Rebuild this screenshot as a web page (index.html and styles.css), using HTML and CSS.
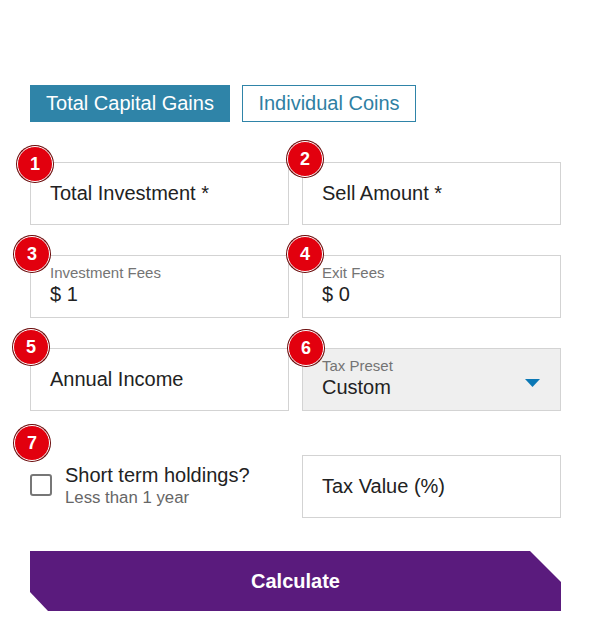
FILE: index.html
```html
<!DOCTYPE html>
<html lang="en">
<head>
<meta charset="utf-8">
<title>Capital Gains Calculator</title>
<link rel="stylesheet" href="styles.css">
</head>
<body>
<main class="calc">
  <div class="tabs">
    <button class="tab tab-active">Total Capital Gains</button>
    <button class="tab tab-coins">Individual Coins</button>
  </div>

  <div class="grid">
    <div class="cell">
      <span class="badge b1">1</span>
      <div class="field"><span class="placeholder">Total Investment *</span></div>
    </div>
    <div class="cell">
      <span class="badge b2">2</span>
      <div class="field"><span class="placeholder">Sell Amount *</span></div>
    </div>

    <div class="cell">
      <span class="badge b3">3</span>
      <div class="field field-labeled">
        <span class="label">Investment Fees</span>
        <span class="value">$ 1</span>
      </div>
    </div>
    <div class="cell">
      <span class="badge b4">4</span>
      <div class="field field-labeled">
        <span class="label">Exit Fees</span>
        <span class="value">$ 0</span>
      </div>
    </div>

    <div class="cell">
      <span class="badge b5">5</span>
      <div class="field"><span class="placeholder">Annual Income</span></div>
    </div>
    <div class="cell">
      <span class="badge b6">6</span>
      <div class="field field-labeled field-select">
        <div class="select-text">
          <span class="label">Tax Preset</span>
          <span class="value">Custom</span>
        </div>
        <svg class="caret" width="15" height="8" viewBox="0 0 15 8"><path d="M0 0H15L7.5 8Z" fill="#0b78b5"/></svg>
      </div>
    </div>

    <div class="cell cell-last cell-check">
      <span class="badge b7">7</span>
      <span class="checkbox"></span>
      <div class="check-text">
        <span class="check-title">Short term holdings?</span>
        <span class="check-sub">Less than 1 year</span>
      </div>
    </div>
    <div class="cell cell-last">
      <div class="field"><span class="placeholder">Tax Value (%)</span></div>
    </div>
  </div>

  <button class="calculate">Calculate</button>
</main>
</body>
</html>
```

FILE: styles.css
```css
* { box-sizing: border-box; }

html, body {
  margin: 0;
  padding: 0;
  background: #ffffff;
}

body {
  font-family: "Liberation Sans", Arial, sans-serif;
  color: #222222;
}

.calc {
  width: 531px;
  margin-left: 30px;
  padding-top: 85px;
}

.tabs {
  display: flex;
  gap: 12px;
}

.tab {
  font-family: "Liberation Sans", Arial, sans-serif;
  font-size: 20px;
  height: 37px;
  padding: 0;
  border: 1px solid #2f84a8;
  background: #ffffff;
  color: #2f7fa3;
  line-height: 35px;
  margin: 0;
  white-space: nowrap;
  text-align: center;
  cursor: pointer;
}

.tab-active {
  width: 200px;
  background: #2f84a8;
  color: #ffffff;
}

.tab-coins {
  width: 174px;
}

.grid {
  display: grid;
  grid-template-columns: 259px 259px;
  column-gap: 13px;
  row-gap: 30px;
  margin-top: 40px;
}

.cell {
  position: relative;
}

.cell-last {
  margin-top: 14px;
}

.field {
  height: 63px;
  border: 1px solid #d3d3d3;
  background: #ffffff;
  padding: 0 19px;
  display: flex;
  align-items: center;
}

.placeholder {
  font-size: 20px;
  line-height: 23px;
  color: #222222;
}

.field-labeled {
  flex-direction: column;
  align-items: flex-start;
  justify-content: flex-start;
  padding-top: 8px;
}

.label {
  display: block;
  font-size: 15px;
  line-height: 17px;
  color: #747474;
}

.value {
  display: block;
  font-size: 20px;
  line-height: 23px;
  margin-top: 2px;
  color: #222222;
}

.field-select {
  background: #efefef;
  flex-direction: row;
  align-items: flex-start;
  justify-content: space-between;
  padding-right: 20px;
}

.select-text {
  display: flex;
  flex-direction: column;
}

.select-text .value {
  margin-top: 2px;
}

.caret {
  margin-top: 22px;
}

.cell-check {
  display: flex;
  align-items: center;
  height: 63px;
}

.checkbox {
  width: 22px;
  height: 22px;
  border: 2px solid #777777;
  border-radius: 3px;
  background: #ffffff;
  flex: none;
  margin-top: -3px;
}

.check-text {
  display: flex;
  flex-direction: column;
  margin-left: 13px;
  margin-top: -2px;
}

.check-title {
  font-size: 20px;
  line-height: 23px;
  color: #222222;
}

.check-sub {
  font-size: 16.8px;
  line-height: 21px;
  color: #666666;
}

.badge {
  position: absolute;
  width: 36px;
  height: 36px;
  border-radius: 50%;
  background: #e2000e;
  border: 1px solid #ffffff;
  box-shadow: 0 0 0 1px #6a0a0a;
  color: #ffffff;
  font-weight: bold;
  font-size: 18px;
  line-height: 34px;
  text-align: center;
  z-index: 2;
}

.b1 { left: -13px; top: -16px; }
.b2 { left: -15px; top: -21px; }
.b3 { left: -16px; top: -19px; }
.b4 { left: -15px; top: -19px; }
.b5 { left: -17px; top: -19px; }
.b6 { left: -14px; top: -18px; }
.b7 { left: -16px; top: -30px; }

.calculate {
  display: block;
  width: 531px;
  height: 60px;
  margin-top: 33px;
  border: none;
  padding: 0;
  background: #5a1b7d;
  color: #ffffff;
  font-family: "Liberation Sans", Arial, sans-serif;
  font-weight: bold;
  font-size: 20px;
  clip-path: polygon(0 0, 500px 0, 100% 31px, 100% 100%, 18px 100%, 0 41px);
  cursor: pointer;
}
```
